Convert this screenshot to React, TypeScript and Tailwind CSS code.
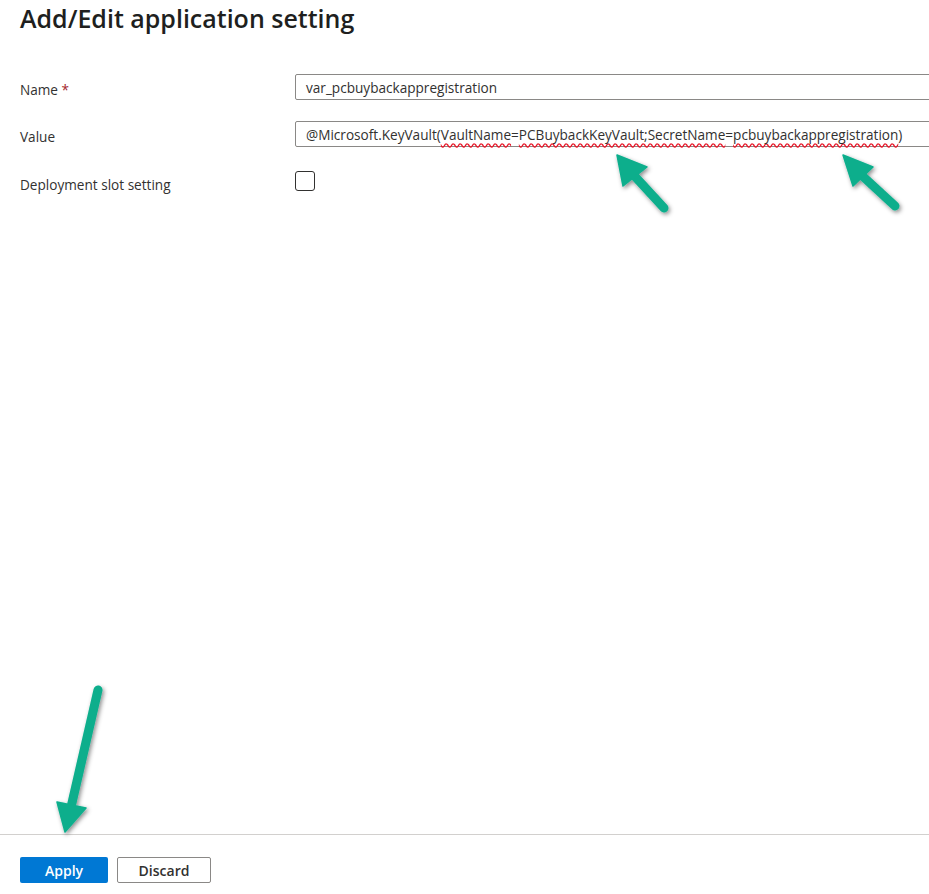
import React from "react";

function Arrow({ tail, tip, c1, c2 }: { tail: [number, number]; tip: [number, number]; c1: [number, number]; c2: [number, number] }) {
  const mx = (c1[0] + c2[0]) / 2;
  const my = (c1[1] + c2[1]) / 2;
  return (
    <g filter="url(#sh)">
      <line x1={tail[0]} y1={tail[1]} x2={mx} y2={my} stroke="#0aae8c" strokeWidth={9} strokeLinecap="round" />
      <polygon points={`${tip[0]},${tip[1]} ${c1[0]},${c1[1]} ${c2[0]},${c2[1]}`} fill="#0aae8c" stroke="#0aae8c" strokeWidth={1.5} strokeLinejoin="round" />
    </g>
  );
}

const wavy = "underline decoration-wavy decoration-[#e81123] underline-offset-[3px]";

export default function App() {
  const font = { fontFamily: '"Segoe UI", "Open Sans", "Noto Sans", sans-serif' };
  return (
    <div className="relative w-[929px] h-[894px] overflow-hidden bg-white text-[#323130] flex flex-col" style={font}>
      <div className="flex-1 flex flex-col">
        <h1 className="pl-[20px] pt-[1px] text-[25px] leading-[34px] font-semibold text-[#201f1e]">Add/Edit application setting</h1>
        <div className="mt-[39px] flex flex-col gap-[21px]">
          <div className="flex items-start">
            <label className="w-[295px] shrink-0 pl-[20px] mt-[6px] leading-[20px] text-[13.6px]">Name <span className="text-[#a4262c]">*</span></label>
            <div className="w-[700px] shrink-0 h-[26px] border border-[#8a8886] rounded-[2px] flex items-center px-[10px] pt-[2px] text-[13.6px]">var_pcbuybackappregistration</div>
          </div>
          <div className="flex items-start">
            <label className="w-[295px] shrink-0 pl-[20px] mt-[6px] leading-[20px] text-[13.6px]">Value</label>
            <div className="w-[700px] shrink-0 h-[26px] border border-[#8a8886] rounded-[2px] flex items-center px-[10px] pt-[2px] text-[13.6px] whitespace-nowrap">
              @Microsoft.KeyVault(
              <span className={wavy}>VaultName</span>=
              <span className={wavy}>PCBuybackKeyVault;SecretName</span>=
              <span className={wavy}>pcbuybackappregistration</span>)
            </div>
          </div>
          <div className="flex items-start mt-[3px]">
            <label className="w-[295px] shrink-0 pl-[20px] mt-[4px] leading-[20px] text-[13.6px]">Deployment slot setting</label>
            <div className="w-[20px] h-[20px] border border-[#323130] rounded-[3px]" />
          </div>
        </div>
      </div>
      <div className="h-[60px] border-t border-[#d2d0ce] flex items-start gap-[9px] pl-[20px] pt-[22px]">
        <button className="w-[88px] h-[26px] bg-[#0078d4] rounded-[2px] text-white text-[14px] font-semibold">Apply</button>
        <button className="w-[94px] h-[26px] border border-[#8a8886] rounded-[2px] text-[#323130] text-[14px] font-semibold">Discard</button>
      </div>
      <svg className="absolute inset-0 pointer-events-none" width={929} height={894}>
        <defs>
          <filter id="sh" x="-50%" y="-50%" width="200%" height="200%">
            <feDropShadow dx="1.5" dy="2" stdDeviation="2" floodColor="#000" floodOpacity="0.45" />
          </filter>
        </defs>
        <Arrow tail={[664, 208]} tip={[617, 155]} c1={[623, 186]} c2={[647, 167]} />
        <Arrow tail={[895, 206]} tip={[843, 155]} c1={[853, 186]} c2={[873, 167]} />
        <Arrow tail={[98, 690]} tip={[65, 832]} c1={[57, 802]} c2={[86, 808]} />
      </svg>
    </div>
  );
}
